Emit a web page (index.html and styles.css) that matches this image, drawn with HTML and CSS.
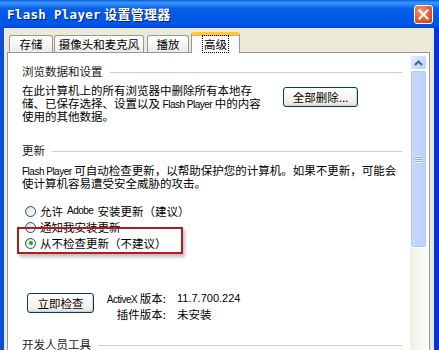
FILE: index.html
```html
<!DOCTYPE html>
<html lang="zh-CN">
<head>
<meta charset="utf-8">
<title>Flash Player 设置管理器</title>
<link rel="stylesheet" href="styles.css">
</head>
<body>
<div class="window">
  <div class="titlebar">
    <span class="title"><span class="mono">Flash Player</span> 设置管理器</span>
    <span class="close">
      <svg width="11" height="11" viewBox="0 0 11 11"><path d="M1.5 1.5 L9.5 9.5 M9.5 1.5 L1.5 9.5" stroke="#fff" stroke-width="2.2" stroke-linecap="square"/></svg>
    </span>
  </div>
  <div class="frame">
    <div class="tabs">
      <div class="tab t1">存储</div>
      <div class="tab t2">摄像头和麦克风</div>
      <div class="tab t3">播放</div>
      <div class="tab sel"><span class="focus">高级</span></div>
    </div>
    <div class="panel">
      <div class="content">
        <div class="heading">浏览数据和设置</div>
        <div class="row1">
          <p class="para p1">在此计算机上的所有浏览器中删除所有本地存<br>储、已保存选择、设置以及 <span class="en">Flash Player</span> 中的内容<br>使用的其他数据。</p>
          <button class="btn del">全部删除...</button>
        </div>
        <div class="heading h2">更新</div>
        <p class="para p2"><span class="en">Flash Player</span> 可自动检查更新，以帮助保护您的计算机。如果不更新，可能会<br>使计算机容易遭受安全威胁的攻击。</p>
        <div class="radios">
          <div class="radio"><span class="dot"></span>允许<span class="en sp">Adobe</span>安装更新（建议）</div>
          <div class="radio"><span class="dot"></span>通知我安装更新</div>
          <div class="radio"><span class="dot on"></span>从不检查更新（不建议）</div>
          <div class="mark"></div>
        </div>
        <div class="check">
          <button class="btn now">立即检查</button>
          <div class="vers">
            <span class="lab"><span class="en">ActiveX</span> 版本:</span><span class="val num">11.7.700.224</span>
            <span class="lab">插件版本:</span><span class="val">未安装</span>
          </div>
        </div>
        <div class="heading h3">开发人员工具</div>
      </div>
      <div class="scrollbar">
        <div class="sb-up">
          <svg width="9" height="6" viewBox="0 0 9 6"><path d="M1 5 L4.5 1.5 L8 5" fill="none" stroke="#4d6185" stroke-width="2"/></svg>
        </div>
        <div class="sb-thumb"><span class="grip"></span></div>
        <div class="sb-track"></div>
      </div>
    </div>
  </div>
</div>
</body>
</html>
```
FILE: styles.css
```css
html, body {
  margin: 0;
  padding: 0;
}
body {
  width: 439px;
  height: 350px;
  overflow: hidden;
  background: #ece9d8;
  font-family: "Noto Sans CJK SC", sans-serif;
  font-size: 11.5px;
  color: #000;
}
.window {
  width: 439px;
  height: 350px;
  display: flex;
  flex-direction: column;
}
.titlebar {
  flex: none;
  height: 28px;
  box-sizing: border-box;
  padding: 0 6px 0 7px;
  display: flex;
  align-items: center;
  justify-content: space-between;
  background: linear-gradient(to bottom, #0a5fd8 0%, #3d95ff 10%, #2b87f8 16%, #0a61e6 30%, #0058e6 60%, #0057e8 88%, #0046d8 100%);
}
.title {
  color: #fff;
  font-weight: bold;
  font-size: 13px;
  line-height: 16px;
  text-shadow: 1px 1px 0 #0a1e78;
  letter-spacing: 0.3px;
}
.title .mono {
  font-family: "DejaVu Sans Mono", monospace;
  font-size: 12.5px;
}
.close {
  width: 19px;
  height: 19px;
  box-sizing: border-box;
  border: 1px solid #fff;
  border-radius: 3px;
  background: radial-gradient(circle at 35% 30%, #f39a7e 0%, #e25b2c 55%, #c8411b 100%);
  display: flex;
  align-items: center;
  justify-content: center;
}
.frame {
  flex: 1;
  min-height: 0;
  display: flex;
  flex-direction: column;
  border-left: 4px solid #0a4fd8;
  border-right: 5px solid #0831d9;
  box-shadow: inset -1px 0 0 #ece9d8;
  padding: 0 4px 0 3px;
}
.tabs {
  flex: none;
  height: 24px;
  display: flex;
  align-items: flex-end;
  padding-left: 2px;
  position: relative;
  z-index: 2;
}
.tab {
  height: 17px;
  box-sizing: border-box;
  border: 1px solid #919b9c;
  border-bottom: none;
  border-radius: 3px 3px 0 0;
  background: linear-gradient(to bottom, #ffffff 0%, #f7f7f4 50%, #ecebe5 100%);
  line-height: 16px;
  text-align: center;
  margin-right: 1px;
}
.t1 { width: 44px; }
.t2 { width: 90px; margin-right: 3px; }
.t3 { width: 42px; margin-right: 2px; }
.tab.sel {
  width: 49px;
  height: 21px;
  margin-bottom: -1px;
  background: #fcfcfe;
  border-top: 3px solid #ffc83c;
  box-shadow: inset 0 1px 0 #f6b23b;
  line-height: 16px;
  padding-top: 1px;
}
.focus {
  outline: 1px dotted #000;
  outline-offset: 0;
  padding: 0 1px;
}
.panel {
  flex: 1;
  min-height: 0;
  display: flex;
  border: 1px solid #919b9c;
  border-bottom: none;
  background: #fff;
  padding: 2px 2px 0 0;
}
.content {
  flex: 1;
  padding: 9px 8px 0 14px;
  background: #fff;
}
.heading {
  display: flex;
  align-items: center;
  height: 14px;
  line-height: 14px;
  color: #222;
}
.heading::after {
  content: "";
  flex: 1;
  height: 1px;
  background: #d0d0c6;
  margin-left: 7px;
  margin-top: 3px;
}
.para {
  margin: 0;
  line-height: 13px;
}
.en {
  font-family: "Liberation Sans", sans-serif;
  font-size: 10px;
  letter-spacing: -0.5px;
  line-height: 1;
}
.sp { margin: 0 4px; }
.row1 {
  display: flex;
  align-items: flex-start;
  margin-top: 6px;
}
.p1 { width: 261px; flex: none; }
.btn {
  font-family: inherit;
  font-size: 11.5px;
  color: #000;
  height: 20px;
  box-sizing: border-box;
  border: 1px solid #003c74;
  border-radius: 3px;
  background: linear-gradient(to bottom, #ffffff 0%, #f4f3ee 70%, #e3e0d6 100%);
  box-shadow: inset -1px -1px 0 #d6d0c5;
  padding: 0;
  line-height: 17px;
}
.del {
  width: 75px;
  margin-top: 3px;
}
.h2 { margin-top: 20px; }
.p2 { margin-top: 7px; line-height: 12px; }
.radios {
  position: relative;
  margin-top: 14px;
}
.radio {
  height: 16px;
  line-height: 16px;
  display: flex;
  align-items: center;
  padding-left: 3px;
}
.dot {
  width: 11px;
  height: 11px;
  box-sizing: border-box;
  border: 1px solid #1c5180;
  border-radius: 50%;
  background: linear-gradient(135deg, #dcdcd6 0%, #f4f4f0 60%, #ffffff 100%);
  margin-right: 4px;
  position: relative;
}
.dot.on::after {
  content: "";
  position: absolute;
  left: 2.5px;
  top: 2.5px;
  width: 4px;
  height: 4px;
  border-radius: 50%;
  background: #21a121;
}
.mark {
  position: absolute;
  left: -5px;
  top: 24px;
  width: 166px;
  height: 27px;
  box-sizing: border-box;
  border: 2px solid #b01e24;
  box-shadow: 2px 3px 3px rgba(0, 0, 0, 0.25);
}
.check {
  display: flex;
  align-items: flex-start;
  margin-top: 39px;
}
.now {
  width: 67px;
  margin: 3px 0 0 5px;
}
.vers {
  display: grid;
  grid-template-columns: 72px auto;
  grid-auto-rows: 16px;
  column-gap: 11px;
  line-height: 16px;
}
.lab { text-align: right; }
.num {
  font-family: "Liberation Sans", sans-serif;
  font-size: 11px;
}
.h3 { margin-top: 15px; }
.scrollbar {
  flex: none;
  width: 17px;
  display: flex;
  flex-direction: column;
  background: linear-gradient(to right, #eeede5, #fbfbf8);
}
.sb-up {
  height: 15px;
  box-sizing: border-box;
  border: 1px solid #fff;
  border-radius: 3px;
  background: linear-gradient(135deg, #e4ecfd, #b9cefb);
  display: flex;
  align-items: center;
  justify-content: center;
}
.sb-thumb {
  height: 178px;
  box-sizing: border-box;
  border: 1px solid #fff;
  border-radius: 3px;
  background: linear-gradient(to right, #c8d8fc, #bcd0fb);
  box-shadow: inset 0 0 0 1px #b4c8f4;
  display: flex;
  align-items: center;
  justify-content: center;
}
.grip {
  width: 7px;
  height: 7px;
  background: repeating-linear-gradient(to bottom, #eef3fe 0 1px, #8caae6 1px 2px);
}
.sb-track { flex: 1; }
```
